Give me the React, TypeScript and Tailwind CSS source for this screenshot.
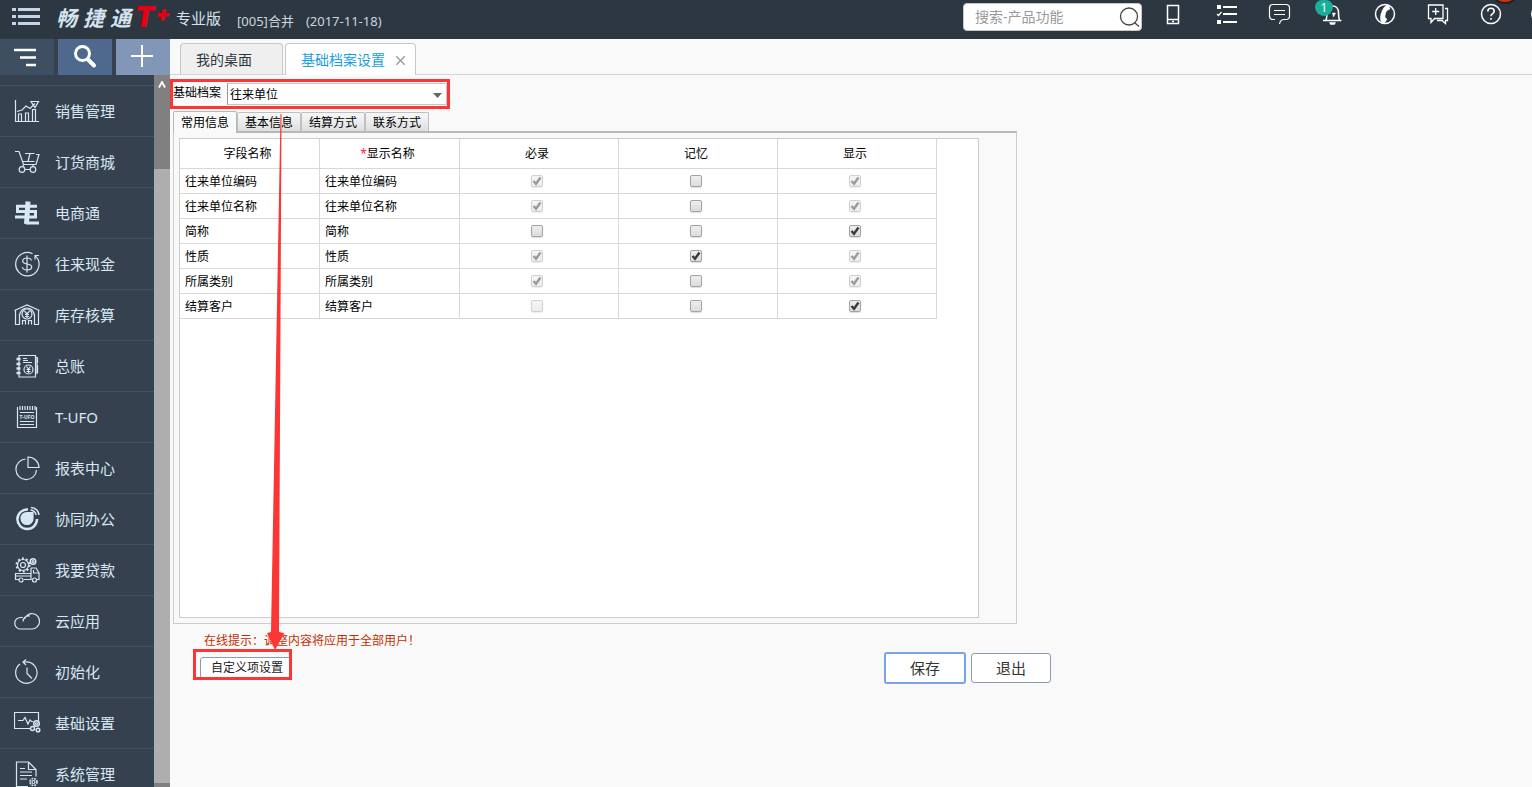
import { useState } from 'react'
import type { ReactNode } from 'react'

interface MenuItem {
  label: string
  icon: ReactNode
}

interface Field {
  name: string
  // [checked, disabled]
  required: [boolean, boolean]
  memory: [boolean, boolean]
  visible: [boolean, boolean]
}

const menus: MenuItem[] = [
  {
    label: '销售管理',
    icon: (
      <>
        <path d="M1.500 2v21.500h23.500M4.500 23v-7h3v7M11.500 23v-8h3v8M18.500 23V11.500h3V23" />
        <path d="M3 13.500l5-1.500 4-4 4 2.500 5-5M17 3.500h7.500l-3.500 6z" />
      </>
    ),
  },
  {
    label: '订货商城',
    icon: (
      <>
        <path d="M1 2.500h4l4.500 13h12.500l3-10h-3M11 4.500h9.500M8.500 12.500h12M14 12.500l2-8" />
        <circle cx="8" cy="20.500" r="2.800" />
        <circle cx="19" cy="20.500" r="2.800" />
        <path d="M11 20.500h5M10 15.500L8 18M19 15.500v2" />
      </>
    ),
  },
  {
    label: '电商通',
    icon: (
      <>
        <path d="M23 6.200H3.500v5.300h18V17H1M12 23h13" strokeWidth="3" />
        <path d="M14 1.500L12.500 24" strokeWidth="5" />
      </>
    ),
  },
  {
    label: '往来现金',
    icon: (
      <>
        <path d="M18.500 2.700A11.700 11.700 0 1 0 24.300 9M21 8.500V4.500h4M21.500 5l3 4" />
        <path d="M17.500 9.500c-.5-1.800-2-2.500-4.500-2.500s-4.300 1-4.300 3c0 4.500 9 1.500 9 6 0 2-2 3-4.700 3-2.800 0-4.300-1-4.700-3M13 4.500v17" />
      </>
    ),
  },
  {
    label: '库存核算',
    icon: (
      <>
        <path d="M.5 8.500L13 3l12.500 5.500M1.500 8v14.500h4V12M24.500 8v14.500h-4V12" />
        <circle cx="13" cy="12" r="5" />
        <path d="M10.500 9l2.500 3 2.500-3M13 12v4M11 12.500h4M11 14.500h4M5.500 13c1-4 3-7 7.500-7s6.500 3 7.500 7M8.500 22.500v-4h3v4M14.500 22.500v-4h3v4" />
      </>
    ),
  },
  {
    label: '总账',
    icon: (
      <>
        <path d="M5 2.500h16.500v21.500H5zM23 4v17M21.500 4l2 1v5M23.500 12v8M9 5.500h4M9 7.500h5M9 9.500h9" />
        <path d="M2.500 6h4M2.500 11h4M2.500 15.500h4M2.500 20h4" strokeWidth="2.500" />
        <circle cx="14.500" cy="16.500" r="4.500" />
        <path d="M12.500 13.500l2 2.500 2-2.500M14.500 16v4M12.500 16.500h4M12.500 18.500h4" />
      </>
    ),
  },
  {
    label: 'T-UFO',
    icon: (
      <>
        <path d="M3.500 3v20.500h19V3M6 2v4M8.500 2v4M11 2v4M13.500 2v4M16 2v4M18.500 2v4M21 2v4M6 8.500h14M6 17.500h14M6 20.500h14" />
        <text x="13" y="15" textAnchor="middle" fontSize="5" fontWeight="700" fill="currentColor" stroke="none">
          T-UFO
        </text>
      </>
    ),
  },
  {
    label: '报表中心',
    icon: (
      <>
        <path d="M11.500 4A10.300 10.300 0 1 0 22.500 15" />
        <path d="M14 2v10.500h11A11 11 0 0 0 14 2z" />
      </>
    ),
  },
  {
    label: '协同办公',
    icon: (
      <>
        <path d="M14 3.500a9.800 9.800 0 1 0 9 9.500" strokeWidth="2.500" />
        <path d="M19 6.500v6a6 6 0 1 1-6-6z" fill="currentColor" />
        <path d="M16.500 4c3 .3 5 2 5.500 5M17 1.500c4.500.5 7.500 3.500 8 7.500" strokeWidth="1.500" />
      </>
    ),
  },
  {
    label: '我要贷款',
    icon: (
      <>
        <circle cx="9" cy="8" r="5.500" />
        <circle cx="9" cy="8" r="6.500" strokeWidth="2" strokeDasharray="2 2.100" />
        <circle cx="9" cy="8" r="2.500" />
        <circle cx="19" cy="4.500" r="2.800" strokeWidth="1.500" />
        <circle cx="19" cy="4.500" r="1" />
        <path d="M5 22.500H1.500v-6H17v6h-7M17 11h5l3 5v6.500h-2M17 11v11.500M19.500 13v3H25M2 19h15" />
        <circle cx="7" cy="23" r="2" />
        <circle cx="20.500" cy="23" r="2" />
      </>
    ),
  },
  {
    label: '云应用',
    icon: (
      <path d="M6.500 9.500a5.700 5.700 0 0 0 0 11.500h11.500a7.700 7.700 0 1 0-7.500-10M6.500 9.500c.8-.1 1.500 0 2.200.3M9 13.500c0-3.500 3-6 7-5.500" />
    ),
  },
  {
    label: '初始化',
    icon: <path d="M6 5A10.700 10.700 0 1 0 11 3H9M12 .5L9 3l3 3M13 8.500v6l5 5" />,
  },
  {
    label: '基础设置',
    icon: (
      <>
        <path d="M16 18.500H.5v-16h24V12M4 10.500h5l2-3 3 6.500 2-4 1.500 1.500H19" />
        <circle cx="22.500" cy="13.500" r="2.800" strokeWidth="1.500" />
        <circle cx="18.500" cy="18.500" r="2" strokeWidth="1.500" />
        <circle cx="24" cy="20" r="1.800" strokeWidth="1.500" />
        <circle cx="22.500" cy="13.500" r="1" />
      </>
    ),
  },
  {
    label: '系统管理',
    icon: (
      <>
        <path d="M14 25.500H2.500V1h12l7.500 7.500v7M14.500 1v7.500H22M6 7.500h5M6 11h12M6 14.500h12M6 18h7" />
        <circle cx="19.500" cy="21" r="3.500" strokeWidth="1.700" strokeDasharray="1.800 1" />
        <circle cx="19.500" cy="21" r="1.500" />
      </>
    ),
  },
]

const fields: Field[] = [
  { name: '往来单位编码', required: [true, true], memory: [false, false], visible: [true, true] },
  { name: '往来单位名称', required: [true, true], memory: [false, false], visible: [true, true] },
  { name: '简称', required: [false, false], memory: [false, false], visible: [true, false] },
  { name: '性质', required: [true, true], memory: [true, false], visible: [true, true] },
  { name: '所属类别', required: [true, true], memory: [false, false], visible: [true, true] },
  { name: '结算客户', required: [false, true], memory: [false, false], visible: [true, false] },
]

const subTabs = ['常用信息', '基本信息', '结算方式', '联系方式']

// 顶部右侧图标
const headerIcons: MenuItem[] = [
  {
    label: '手机',
    icon: (
      <>
        <rect x="6.500" y="3.500" width="11" height="18" />
        <path d="M6.500 17.500h11M11 19.500h2" />
      </>
    ),
  },
  {
    label: '待办',
    icon: (
      <>
        <path d="M9 5H23M9 12H23M9 20H23" strokeWidth="2" />
        <path d="M3 5h4M3 20h4" strokeWidth="4" />
        <path d="M3 12l1.500 1.500L7.500 10" strokeWidth="1.200" />
      </>
    ),
  },
  {
    label: '消息',
    icon: (
      <path
        d="M8 17.500H6a3.500 3.500 0 0 1-3.500-3.500V6A3.500 3.500 0 0 1 6 2.500h13A3.500 3.500 0 0 1 22.500 6v8a3.500 3.500 0 0 1-3.500 3.500H17c-3 0-4 2-4.500 4.500M7 8.500h11M7 12.500h11"
        strokeWidth="1.200"
      />
    ),
  },
  {
    label: '通知',
    icon: (
      <>
        <path d="M3 18.500h18.500M6 18.500c1-3 1-5 1-8 0-4 2-6.500 5.500-6.500S18.500 6.500 18.500 10.500c0 3 0 5 1 8" strokeWidth="1.500" />
        <path d="M9.500 20.500h6l-1 2h-4z" fill="currentColor" strokeWidth=".5" />
        <path d="M12.500 11h3l-2 4z" fill="currentColor" strokeWidth=".5" />
      </>
    ),
  },
  {
    label: '电话',
    icon: (
      <>
        <circle cx="12" cy="12" r="9.500" />
        <path
          d="M12.500 4l3-1 1.500 4-3 1.500c-1.500 2-2 4.500-2 7l2 1.500-2 3.500-2.500 1C7 19 7 14.500 8.500 10.500 9.500 7.500 10.700 5.500 12.500 4z"
          fill="currentColor"
          strokeWidth=".5"
        />
      </>
    ),
  },
  {
    label: '客服',
    icon: (
      <path d="M2.500 3h14.500v13.500H8.500L5 20.500v-4H2.500zM19 6.500h2.500v12H19.500v3l-3.500-3h-5M9.700 6v7M6.200 9.500h7" strokeWidth="1.300" />
    ),
  },
  {
    label: '帮助',
    icon: (
      <>
        <circle cx="12" cy="12" r="9.500" />
        <path d="M8.800 9.500c0-2 1.400-3.200 3.200-3.200s3.200 1.200 3.200 3c0 2.400-3.200 2.500-3.200 5M12 16v1.800" strokeWidth="1.600" />
      </>
    ),
  },
]

function CheckBox({ state, label }: { state: [boolean, boolean]; label: string }) {
  const [checked, setChecked] = useState(state[0])
  return (
    <span className={`relative block mx-auto w-3 h-[13px] ${state[1] ? 'opacity-50' : ''}`}>
      <input
        type="checkbox"
        aria-label={label}
        checked={checked}
        disabled={state[1]}
        onChange={(e) => setChecked(e.target.checked)}
        className="block appearance-none w-3 h-3 rounded-[2px] border border-[#a3a3a3] bg-linear-to-b from-[#eeeeee] to-[#dcdcdc] shadow-[0_1px_1px_#dddddd]"
      />
      {checked && (
        <svg viewBox="0 0 12 12" className="absolute top-0 left-0 size-3 pointer-events-none" fill="none" stroke="#3a3a3a" strokeWidth="2.400">
          <path d="M2.500 6l2.500 2.800L9.500 2.500" />
        </svg>
      )}
    </span>
  )
}

function Header() {
  return (
    <header className="flex h-[39px] shrink-0 bg-[#2c3742] text-[#d5e3ee]">
      <button aria-label="菜单" className="ml-3 mt-2 h-[18px] w-7 shrink-0">
        <svg width="28" height="18" stroke="#c3d3ea" strokeWidth="3">
          <path d="M0 1.500h4M6 1.500h22M0 8.500h4M6 8.500h22M0 15.500h4M6 15.500h22" />
        </svg>
      </button>
      <div className="ml-4 flex shrink-0">
        <div className="flex gap-1.5 pt-1.5 text-[21px] leading-6 font-bold italic">
          <span>畅</span>
          <span>捷</span>
          <span>通</span>
        </div>
        <div className="flex w-[43px] gap-px pl-1 font-['Inter',sans-serif] font-black italic text-[#e60012]">
          <span className="text-[28px] leading-[34px]">T</span>
          <span className="text-[22px] leading-[27px]">+</span>
        </div>
        <span className="ml-0.5 pt-1 text-[15px] leading-7">专业版</span>
      </div>
      <div className="ml-4 flex shrink-0 gap-3 pt-[11px] text-[13px] leading-5 text-[#ccd6de]">
        <span>[005]合并</span>
        <span>(2017-11-18)</span>
      </div>
      <div className="ml-auto flex shrink-0 overflow-hidden">
        <form className="mt-[3px] flex h-7 w-[179px] items-center rounded-[4px] border border-[#c8c8c8] bg-white pl-[11px]">
          <input
            aria-label="搜索"
            placeholder="搜索-产品功能"
            className="min-w-0 flex-1 text-[14px] leading-5 text-[#333333] outline-none placeholder:text-[#999999]"
          />
          <button type="button" aria-label="搜索" className="mr-px">
            <svg width="22" height="22" fill="none" stroke="#444444" strokeWidth="1.300">
              <circle cx="11" cy="10.500" r="8.500" />
              <path d="M17 17l4 3.500" />
            </svg>
          </button>
        </form>
        <nav className="ml-1 flex">
          {headerIcons.map((it) => (
            <button key={it.label} aria-label={it.label} className="relative flex h-7 w-[53px] items-center justify-center text-white">
              <svg width="24" height="24" fill="none" stroke="currentColor" strokeWidth="1.500">
                {it.icon}
              </svg>
              {it.label === '通知' && (
                <span className="absolute top-0 left-2.5 h-4 w-[18px] rounded-t-[7px] rounded-b-[9px] bg-[#1aae9b] text-center text-[12px] leading-4">
                  1
                </span>
              )}
            </button>
          ))}
        </nav>
        <div className="relative w-[15px]">
          <span className="absolute -top-7 -left-7 size-8 rounded-full border-2 border-[#222222] bg-[#d93010]" />
          <span className="absolute top-1 left-3.5 size-5 rounded-full border border-white" />
        </div>
      </div>
    </header>
  )
}

function Sidebar() {
  return (
    <aside className="flex w-[170px] shrink-0 flex-col bg-[#36414f]">
      <div className="flex h-9 shrink-0 gap-1 text-white">
        <button aria-label="收起" className="flex flex-1 items-center justify-center bg-[#3d4f61]">
          <svg width="26" height="20" stroke="currentColor" strokeWidth="2.500">
            <path d="M0 3h22M6 10.500h16M12 18h10" />
          </svg>
        </button>
        <button aria-label="查找" className="flex flex-1 items-center justify-center bg-[#4e688e]">
          <svg width="24" height="26" fill="none" stroke="currentColor" strokeLinecap="round">
            <circle cx="9.500" cy="9.500" r="7" strokeWidth="3" />
            <path d="M15 15.500l6 6" strokeWidth="4" />
          </svg>
        </button>
        <button aria-label="新增" className="flex flex-1 items-center justify-center bg-[#8297b8]">
          <svg width="24" height="24" stroke="currentColor" strokeWidth="2">
            <path d="M11 0v22M0 11h22" />
          </svg>
        </button>
      </div>
      <div className="flex min-h-0 flex-1">
        <nav className="flex-1 overflow-hidden pt-2.5">
          {menus.map((m) => (
            <a key={m.label} href="#" className="flex h-[51px] items-center gap-3.5 border-t border-[#43505e] pl-3.5 text-[15px] text-[#d7e8f4]">
              <svg width="27" height="26" fill="none" stroke="currentColor" strokeWidth="1.200" className="shrink-0">
                {m.icon}
              </svg>
              <span>{m.label}</span>
            </a>
          ))}
        </nav>
        {/* 滚动条 */}
        <div className="flex w-4 flex-col justify-between bg-[#aeaeae]">
          <div className="h-[94px] bg-[#808080] pt-1.5">
            <svg width="16" height="8" fill="none" stroke="white" strokeWidth="1.800">
              <path d="M5 6.500L8 1l3 5.500" />
            </svg>
          </div>
          <div className="h-1 bg-[#808080]" />
        </div>
      </div>
    </aside>
  )
}

function FieldTable() {
  return (
    <table className="w-[757px] table-fixed border-separate border-spacing-0 text-[12px] leading-4">
      <colgroup>
        <col className="w-[140px]" />
        <col className="w-[140px]" />
        <col className="w-[159px]" />
        <col className="w-[159px]" />
        <col className="w-[159px]" />
      </colgroup>
      <thead>
        <tr className="h-[30px]">
          <th className="border-r border-b border-[#d8d8d8] py-0 pr-1 pl-0 font-normal">字段名称</th>
          <th className="border-r border-b border-[#d8d8d8] py-0 pr-1 pl-0 font-normal">
            <span className="text-[#ff2244]">*</span>显示名称
          </th>
          <th className="border-r border-b border-[#d8d8d8] py-0 pr-1 pl-0 font-normal">必录</th>
          <th className="border-r border-b border-[#d8d8d8] py-0 pr-1 pl-0 font-normal">记忆</th>
          <th className="border-r border-b border-[#d8d8d8] py-0 pr-1 pl-0 font-normal">显示</th>
        </tr>
      </thead>
      <tbody>
        {fields.map((f) => (
          <tr key={f.name} className="h-[25px]">
            <td className="border-r border-b border-[#d8d8d8] pt-0.5 pr-0 pb-0 pl-[5px]">{f.name}</td>
            <td className="border-r border-b border-[#d8d8d8] pt-0.5 pr-0 pb-0 pl-[5px]">{f.name}</td>
            <td className="border-r border-b border-[#d8d8d8] py-0 pr-1 pl-0">
              <CheckBox state={f.required} label={`${f.name} 必录`} />
            </td>
            <td className="border-r border-b border-[#d8d8d8] py-0 pr-1 pl-0">
              <CheckBox state={f.memory} label={`${f.name} 记忆`} />
            </td>
            <td className="border-r border-b border-[#d8d8d8] py-0 pr-1 pl-0">
              <CheckBox state={f.visible} label={`${f.name} 显示`} />
            </td>
          </tr>
        ))}
      </tbody>
    </table>
  )
}

export default function App() {
  const [active, setActive] = useState(0)

  return (
    <div className="flex h-screen flex-col overflow-hidden bg-[#f9f9f9] font-['Noto_Sans','Noto_Sans_CJK_SC',sans-serif] text-black">
      <Header />
      <div className="flex min-h-0 flex-1">
        <Sidebar />
        <main className="relative min-w-0 flex-1">
          {/* 页签 */}
          <div className="flex h-9 items-end gap-0.5 border-b border-[#d4d4d4] pl-2.5 text-[14px]">
            <button className="h-[31px] w-[103px] rounded-t-[4px] border border-b-0 border-[#c8c8c8] bg-[#efefef] pl-[15px] text-left text-[#2c3742]">
              我的桌面
            </button>
            <div className="-mb-px flex h-8 w-[131px] items-center justify-between rounded-t-[4px] border border-b-0 border-[#c8c8c8] bg-white pr-2.5 pl-[15px]">
              <button className="text-[#1a9fe3]">基础档案设置</button>
              <button aria-label="关闭" className="mt-0.5">
                <svg width="9" height="9" stroke="#a0a0a0" strokeWidth="1.500">
                  <path d="M0 0l9 9M9 0L0 9" />
                </svg>
              </button>
            </div>
          </div>

          <div className="mt-1 flex h-[30px] w-[280px] items-stretch border-[3px] border-[#fc3535] text-[12px]">
            <label htmlFor="archive" className="w-[54px] leading-[22px]">
              基础档案
            </label>
            <div className="relative my-px flex-1">
              <select id="archive" className="h-full w-full appearance-none border border-[#c6c6c6] border-l-[#999999] bg-white pt-0.5 pl-0.5">
                <option>往来单位</option>
              </select>
              <svg width="9" height="5" className="pointer-events-none absolute top-2.5 right-[5px]" fill="#666666">
                <path d="M0 0h9L4.500 5z" />
              </svg>
            </div>
          </div>

          <div className="mt-0.5 ml-[3px] flex items-end text-[12px] leading-4">
            {subTabs.map((t, i) => (
              <button
                key={t}
                onClick={() => setActive(i)}
                className={
                  i === active
                    ? 'z-10 -mb-0.5 h-[22px] w-16 rounded-t-[2px] border border-b-0 border-[#b8b8b8] bg-[#f9f9f9]'
                    : 'h-[19px] w-16 rounded-t-[2px] border border-b-0 border-[#c0c0c0] bg-linear-to-b from-[#f8f8f8] to-[#dedede] pt-0.5'
                }
              >
                {t}
              </button>
            ))}
          </div>
          <div className="ml-[3px] w-[844px] max-w-full border border-t-2 border-[#cccccc] border-t-[#b8b8b8] p-[5px]">
            <div className="min-h-[480px] w-[800px] max-w-full border border-[#cccccc] bg-white">
              <FieldTable />
            </div>
          </div>

          <p className="mt-[9px] ml-[34px] text-[12px] leading-4 text-[#c03000]">在线提示：调整内容将应用于全部用户！</p>
          <div className="flex w-[881px] max-w-full items-start gap-[5px] pl-[23px]">
            <div className="mr-auto h-[31px] w-[99px] overflow-hidden border-[3px] border-[#fc3535] pt-[5px] pl-1">
              <button className="block h-[22px] w-24 rounded-[3px] border border-[#8c9bb0] bg-white pl-2.5 text-left text-[12px] leading-5 text-[#222222]">
                自定义项设置
              </button>
            </div>
            <button className="mt-[3px] h-8 w-[82px] rounded-[3px] border-2 border-[#7ba3ea] bg-white text-[15px] leading-6 text-[#333333]">
              保存
            </button>
            <button className="mt-1 h-[30px] w-20 rounded-[3px] border border-[#8c9bb0] bg-white text-[15px] leading-6 text-[#333333]">
              退出
            </button>
          </div>

          {/* 指引箭头 */}
          <svg width="20" height="536" className="pointer-events-none absolute top-[75px] left-24 z-20" fill="#fc3535">
            <path d="M14.500 0h1L13 518l5 1-9 17-8-17 4-1z" />
          </svg>
        </main>
      </div>
    </div>
  )
}
